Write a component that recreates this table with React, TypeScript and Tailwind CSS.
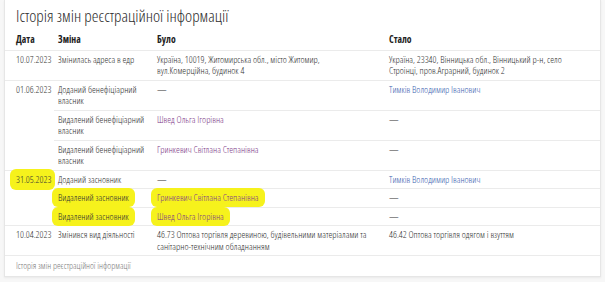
const FONT = { fontFamily: '"Open Sans", "Noto Sans", sans-serif' };

type Cell = { text: string[]; kind?: "link" | "visited" | "plain"; hl?: boolean };

interface Row {
    date?: string;
    dateSpan?: number;
    dateHl?: boolean;
    change: Cell;
    before: Cell;
    after: Cell;
}

const rows: Row[] = [
    {
        date: "10.07.2023",
        change: { text: ["Змінилась адреса в едр"] },
        before: { text: ["Україна, 10019, Житомирська обл., місто Житомир,", "вул.Комерційна, будинок 4"] },
        after: { text: ["Україна, 23340, Вінницька обл., Вінницький р-н, село", "Строінці, пров.Аграрний, будинок 2"] },
    },
    {
        date: "01.06.2023",
        dateSpan: 3,
        change: { text: ["Доданий бенефіціарний", "власник"] },
        before: { text: ["—"] },
        after: { text: ["Тимків Володимир Іванович"], kind: "link" },
    },
    {
        change: { text: ["Видалений бенефіціарний", "власник"] },
        before: { text: ["Швед Ольга Ігорівна"], kind: "visited" },
        after: { text: ["—"] },
    },
    {
        change: { text: ["Видалений бенефіціарний", "власник"] },
        before: { text: ["Гринкевич Світлана Степанівна"], kind: "visited" },
        after: { text: ["—"] },
    },
    {
        date: "31.05.2023",
        dateSpan: 3,
        dateHl: true,
        change: { text: ["Доданий засновник"] },
        before: { text: ["—"] },
        after: { text: ["Тимків Володимир Іванович"], kind: "link" },
    },
    {
        change: { text: ["Видалений засновник"], hl: true },
        before: { text: ["Гринкевич Світлана Степанівна"], kind: "visited", hl: true },
        after: { text: ["—"] },
    },
    {
        change: { text: ["Видалений засновник"], hl: true },
        before: { text: ["Швед Ольга Ігорівна"], kind: "visited", hl: true },
        after: { text: ["—"] },
    },
    {
        date: "10.04.2023",
        change: { text: ["Змінився вид діяльності"] },
        before: { text: ["46.73 Оптова торгівля деревиною, будівельними матеріалами та", "санітарно-технічним обладнанням"] },
        after: { text: ["46.42 Оптова торгівля одягом і взуттям"] },
    },
];

function CellBody({ cell }: { cell: Cell }) {
    const color =
        cell.kind === "link" ? "text-[#3c63b0]" : cell.kind === "visited" ? "text-[#7e3a88]" : "text-[#333]";
    return (
        <div className={color}>
            {cell.text.map((t, i) => (
                <div key={i} className="whitespace-nowrap">
                    {cell.hl ? (
                        <span className="bg-[#f6f21c] rounded-[6px] -mx-[6px] px-[6px] py-[3px]">{t}</span>
                    ) : (
                        t
                    )}
                </div>
            ))}
        </div>
    );
}

export default function App() {
    return (
        <div className="w-[605px] h-[282px] bg-[#f7f7f7] overflow-hidden font-light [font-stretch:75%]" style={FONT}>
            <div className="ml-[4px] mr-[4px] h-[277px] bg-white border border-t-0 border-[#e6e6e6] shadow-[0_1px_2px_rgba(0,0,0,0.06)]">
                <h1 className="pl-[11px] pt-[4px] h-[30px] text-[17px] leading-[24px] text-[#2e2e2e]">
                    Історія змін реєстраційної інформації
                </h1>
                <table className="w-full table-fixed border-collapse text-[9.7px] leading-[11.5px] text-[#333]">
                    <colgroup>
                        <col className="w-[49px]" />
                        <col className="w-[99px]" />
                        <col className="w-[232px]" />
                        <col />
                    </colgroup>
                    <thead>
                        <tr className="border-b border-[#ebebeb]">
                            <th className="h-[20px] pl-[11px] text-left font-bold text-[#222]">Дата</th>
                            <th className="pl-[4px] text-left font-bold text-[#222]">Зміна</th>
                            <th className="pl-[4px] text-left font-bold text-[#222]">Було</th>
                            <th className="pl-[4px] text-left font-bold text-[#222]">Стало</th>
                        </tr>
                    </thead>
                    <tbody>
                        {rows.map((r, i) => (
                            <tr key={i} className="border-b border-[#ebebeb] align-top">
                                {r.date && (
                                    <td
                                        rowSpan={r.dateSpan ?? 1}
                                        className="pl-[11px] py-[3px] border-b border-[#ebebeb] whitespace-nowrap"
                                    >
                                        {r.dateHl ? (
                                            <span className="bg-[#f6f21c] rounded-[6px] -ml-[6px] pl-[6px] pr-[4px] py-[4px]">
                                                {r.date}
                                            </span>
                                        ) : (
                                            r.date
                                        )}
                                    </td>
                                )}
                                <td className="pl-[4px] py-[3px]">
                                    <CellBody cell={r.change} />
                                </td>
                                <td className="pl-[4px] py-[3px]">
                                    <CellBody cell={r.before} />
                                </td>
                                <td className="pl-[4px] py-[3px]">
                                    <CellBody cell={r.after} />
                                </td>
                            </tr>
                        ))}
                    </tbody>
                </table>
                <div className="pl-[11px] pt-[4px] text-[9.2px] leading-[12px] text-[#7a7a7a]">
                    Історія змін реєстраційної інформації
                </div>
            </div>
        </div>
    );
}
